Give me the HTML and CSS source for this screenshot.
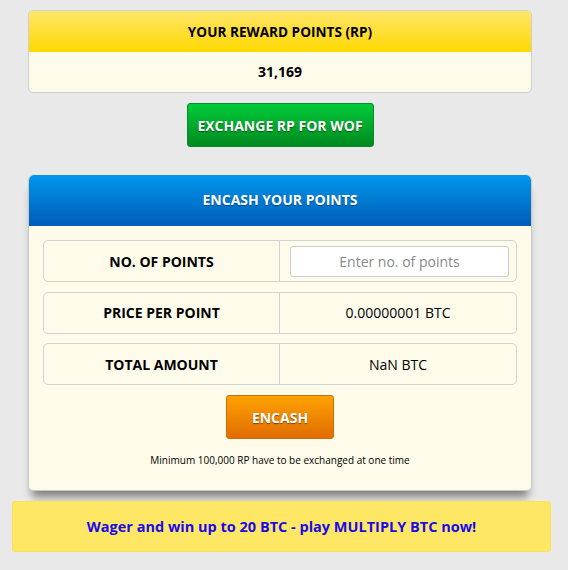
FILE: index.html
```html
<!DOCTYPE html>
<html lang="en">
<head>
  <meta charset="UTF-8">
  <meta name="viewport" content="width=device-width, initial-scale=1.0">
  <title>Reward Points</title>
  <link rel="stylesheet" href="styles.css">
</head>
<body>
<div class="page">

  <div class="rp-box">
    <div class="rp-head">YOUR REWARD POINTS (RP)</div>
    <div class="rp-value">31,169</div>
  </div>

  <div class="btn-row">
    <button class="btn btn-green">EXCHANGE RP FOR WOF</button>
  </div>

  <div class="encash-box">
    <div class="encash-head">ENCASH YOUR POINTS</div>
    <div class="encash-body">
      <div class="row">
        <div class="cell label">NO. OF POINTS</div>
        <div class="cell"><input type="text" class="points-input" placeholder="Enter no. of points"></div>
      </div>
      <div class="row">
        <div class="cell label">PRICE PER POINT</div>
        <div class="cell">0.00000001 BTC</div>
      </div>
      <div class="row">
        <div class="cell label">TOTAL AMOUNT</div>
        <div class="cell">NaN BTC</div>
      </div>
      <div class="btn-row tight">
        <button class="btn btn-orange">ENCASH</button>
      </div>
      <p class="note">Minimum 100,000 RP have to be exchanged at one time</p>
    </div>
  </div>

  <div class="banner">Wager and win up to 20 BTC - play MULTIPLY BTC now!</div>

</div>
</body>
</html>
```

FILE: styles.css
```css
body {
  margin: 0;
  background: #e9e9e9;
  font-family: "Open Sans", "Liberation Sans", sans-serif;
  font-size: 14px;
  color: #000;
}
.page {
  width: 539px;
  padding: 10px 0 0 12px;
}
.rp-box, .encash-box {
  width: 502px;
  margin-left: 16px;
  border: 1px solid #cfcfcf;
  border-radius: 5px;
  background: #fffbeb;
  overflow: hidden;
}
.rp-head {
  height: 41px;
  line-height: 41px;
  text-align: center;
  font-weight: bold;
  font-size: 13.6px;
  background: linear-gradient(#ffe66a, #ffd800);
}
.rp-value {
  height: 40px;
  line-height: 40px;
  text-align: center;
  font-weight: bold;
}
.btn-row {
  display: flex;
  justify-content: center;
  padding: 10px 0 28px;
  margin-left: 16px;
  width: 504px;
}
.btn {
  font-family: inherit;
  font-size: 14px;
  font-weight: bold;
  color: #fff;
  text-shadow: 0 1px 1px rgba(0,0,0,.45);
  border-radius: 3px;
  cursor: pointer;
}
.btn-green {
  width: 187px;
  height: 44px;
  border: 1px solid #0b8a2a;
  background: linear-gradient(#00cc3a, #00891f);
}
.btn-orange {
  width: 108px;
  height: 44px;
  border: 1px solid #d46a00;
  background: linear-gradient(#ffa300, #e06c00);
}
.encash-box {
  box-shadow: 0 10px 9px -4px rgba(0,0,0,.45);
  border-color: #c8c8c8;
  border-top: none;
}
.encash-head {
  height: 51px;
  line-height: 50px;
  text-align: center;
  font-weight: bold;
  color: #fff;
  text-shadow: 0 1px 1px rgba(0,0,0,.35);
  background: linear-gradient(#0097ec, #005cb8);
  border-radius: 5px 5px 0 0;
}
.encash-body {
  padding: 14px 14px 0;
}
.row {
  display: grid;
  grid-template-columns: 1fr 1fr;
  height: 40px;
  border: 1px solid #d2d2d2;
  border-radius: 5px;
  margin-bottom: 9.5px;
}
.cell {
  display: flex;
  align-items: center;
  justify-content: center;
}
.label {
  font-weight: bold;
  border-right: 1px solid #d2d2d2;
}
.points-input {
  box-sizing: border-box;
  width: 219px;
  height: 31px;
  margin-left: 3px;
  border: 1px solid #cdcdcd;
  border-radius: 3px;
  background: #fff;
  font-family: inherit;
  font-size: 14px;
  text-align: center;
}
.points-input::placeholder {
  color: #8a8a8a;
}
.btn-row.tight {
  width: auto;
  margin-left: 0;
  padding: 0.5px 0 0;
}
.note {
  margin: 14px 0 0;
  height: 37px;
  text-align: center;
  font-size: 10px;
}
.banner {
  margin-top: 10px;
  height: 49px;
  line-height: 49px;
  border: 1px solid #fbe25a;
  border-radius: 3px;
  background: #ffe766;
  text-align: center;
  font-weight: bold;
  font-size: 14.5px;
  color: #1a0ae8;
}
```
